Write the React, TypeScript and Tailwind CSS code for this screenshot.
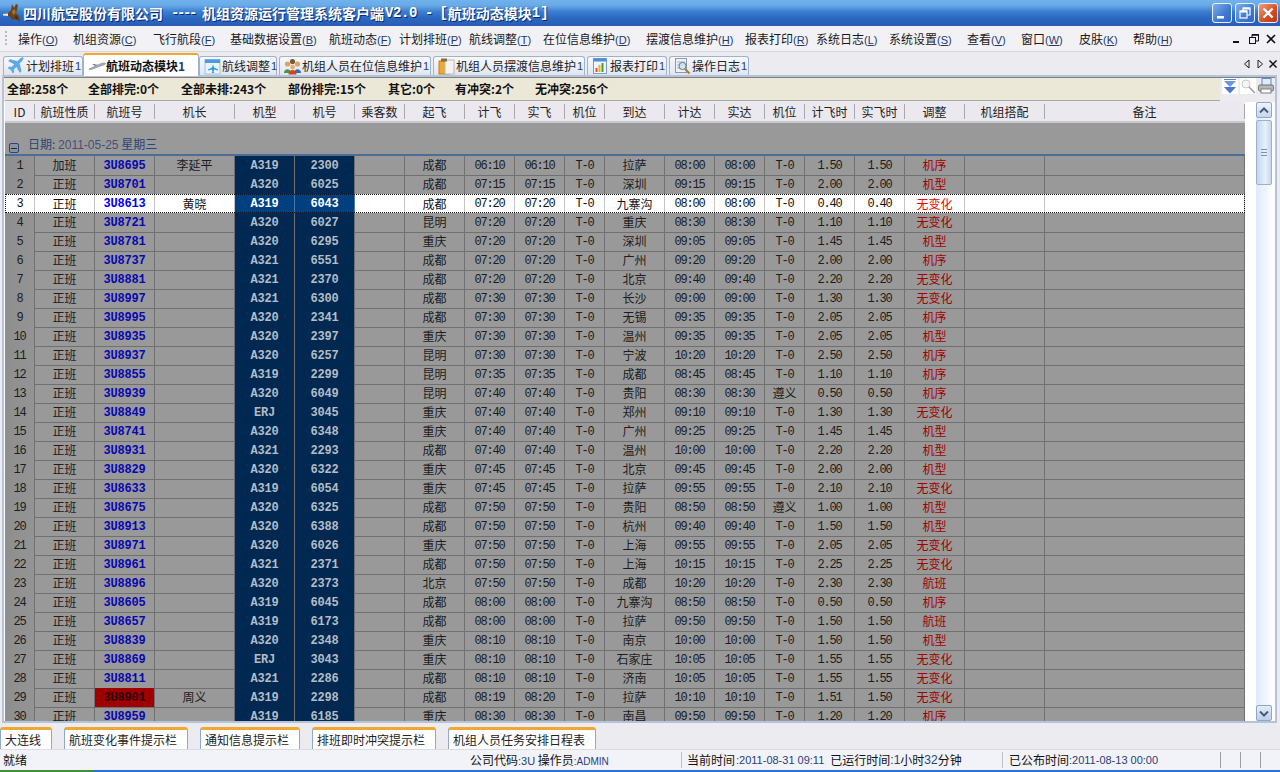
import React from "react";

const CJK = "font-['Noto_Sans_CJK_SC','Liberation_Sans',sans-serif]";
const MONO = "font-['Liberation_Mono','Noto_Sans_CJK_SC',monospace]";
const GRID = "grid grid-cols-[30px_60px_60px_80px_60px_60px_50px_60px_50px_50px_40px_60px_50px_50px_40px_50px_50px_60px_80px_200px]";

const raw = `1 加班 3U8695 李延平 A319 2300 成都 06:10 06:10 T-0 拉萨 08:00 08:00 T-0 1.50 1.50 机序
2 正班 3U8701 - A320 6025 成都 07:15 07:15 T-0 深圳 09:15 09:15 T-0 2.00 2.00 机型
3 正班 3U8613 黄晓 A319 6043 成都 07:20 07:20 T-0 九寨沟 08:00 08:00 T-0 0.40 0.40 无变化
4 正班 3U8721 - A320 6027 昆明 07:20 07:20 T-0 重庆 08:30 08:30 T-0 1.10 1.10 无变化
5 正班 3U8781 - A320 6295 重庆 07:20 07:20 T-0 深圳 09:05 09:05 T-0 1.45 1.45 机型
6 正班 3U8737 - A321 6551 成都 07:20 07:20 T-0 广州 09:20 09:20 T-0 2.00 2.00 机序
7 正班 3U8881 - A321 2370 成都 07:20 07:20 T-0 北京 09:40 09:40 T-0 2.20 2.20 无变化
8 正班 3U8997 - A321 6300 成都 07:30 07:30 T-0 长沙 09:00 09:00 T-0 1.30 1.30 无变化
9 正班 3U8995 - A320 2341 成都 07:30 07:30 T-0 无锡 09:35 09:35 T-0 2.05 2.05 机序
10 正班 3U8935 - A320 2397 重庆 07:30 07:30 T-0 温州 09:35 09:35 T-0 2.05 2.05 机型
11 正班 3U8937 - A320 6257 昆明 07:30 07:30 T-0 宁波 10:20 10:20 T-0 2.50 2.50 机序
12 正班 3U8855 - A319 2299 昆明 07:35 07:35 T-0 成都 08:45 08:45 T-0 1.10 1.10 机序
13 正班 3U8939 - A320 6049 昆明 07:40 07:40 T-0 贵阳 08:30 08:30 遵义 0.50 0.50 机序
14 正班 3U8849 - ERJ 3045 重庆 07:40 07:40 T-0 郑州 09:10 09:10 T-0 1.30 1.30 无变化
15 正班 3U8741 - A320 6348 重庆 07:40 07:40 T-0 广州 09:25 09:25 T-0 1.45 1.45 机型
16 正班 3U8931 - A321 2293 成都 07:40 07:40 T-0 温州 10:00 10:00 T-0 2.20 2.20 机型
17 正班 3U8829 - A320 6322 重庆 07:45 07:45 T-0 北京 09:45 09:45 T-0 2.00 2.00 机型
18 正班 3U8633 - A319 6054 重庆 07:45 07:45 T-0 拉萨 09:55 09:55 T-0 2.10 2.10 无变化
19 正班 3U8675 - A320 6325 成都 07:50 07:50 T-0 贵阳 08:50 08:50 遵义 1.00 1.00 机型
20 正班 3U8913 - A320 6388 成都 07:50 07:50 T-0 杭州 09:40 09:40 T-0 1.50 1.50 机型
21 正班 3U8971 - A320 6026 重庆 07:50 07:50 T-0 上海 09:55 09:55 T-0 2.05 2.05 无变化
22 正班 3U8961 - A321 2371 成都 07:50 07:50 T-0 上海 10:15 10:15 T-0 2.25 2.25 无变化
23 正班 3U8896 - A320 2373 北京 07:50 07:50 T-0 成都 10:20 10:20 T-0 2.30 2.30 航班
24 正班 3U8605 - A319 6045 成都 08:00 08:00 T-0 九寨沟 08:50 08:50 T-0 0.50 0.50 机序
25 正班 3U8657 - A319 6173 成都 08:00 08:00 T-0 拉萨 09:50 09:50 T-0 1.50 1.50 航班
26 正班 3U8839 - A320 2348 重庆 08:10 08:10 T-0 南京 10:00 10:00 T-0 1.50 1.50 机型
27 正班 3U8869 - ERJ 3043 重庆 08:10 08:10 T-0 石家庄 10:05 10:05 T-0 1.55 1.55 无变化
28 正班 3U8811 - A321 2286 成都 08:10 08:10 T-0 济南 10:05 10:05 T-0 1.55 1.55 无变化
29 正班 3U8901 周义 A319 2298 成都 08:19 08:20 T-0 拉萨 10:10 10:10 T-0 1.51 1.50 无变化
30 正班 3U8959 - A319 6185 重庆 08:30 08:30 T-0 南昌 09:50 09:50 T-0 1.20 1.20 机序`;

const rows = raw.split("\n").map((l) => l.split(" "));

const headers = ["ID", "航班性质", "航班号", "机长", "机型", "机号", "乘客数", "起飞", "计飞", "实飞", "机位", "到达", "计达", "实达", "机位", "计飞时", "实飞时", "调整", "机组搭配", "备注"];

const menus: [string, string, string][] = [
  ["操作", "O", "w-[55px]"],
  ["机组资源", "C", "w-[80px]"],
  ["飞行航段", "F", "w-[77px]"],
  ["基础数据设置", "B", "w-[99px]"],
  ["航班动态", "F", "w-[70px]"],
  ["计划排班", "P", "w-[70px]"],
  ["航线调整", "T", "w-[74px]"],
  ["在位信息维护", "D", "w-[103px]"],
  ["摆渡信息维护", "H", "w-[99px]"],
  ["报表打印", "R", "w-[71px]"],
  ["系统日志", "L", "w-[73px]"],
  ["系统设置", "S", "w-[78px]"],
  ["查看", "V", "w-[54px]"],
  ["窗口", "W", "w-[58px]"],
  ["皮肤", "K", "w-[54px]"],
  ["帮助", "H", "w-[60px]"],
];

function Logo() {
  return (
    <svg width="18" height="20" viewBox="0 0 18 20" className="mr-[2px] shrink-0">
      <path d="M0 11 L5 10.5 L6.5 12 L5 13 L0 12.5 Z" fill="#f4e8c8" />
      <path d="M5 10 L8 7 L9 1 L11 5 L13 1 L15 2 L14 7 L13 10 L16 13 L17 19 L13 16 L10 17 L7 14 L5 13 Z" fill="#6b431a" />
      <path d="M9 8 L12 6 L12.5 10 L10 12 Z" fill="#a8742e" />
      <path d="M13 12 L15.5 17 L12 15 Z" fill="#3f280e" />
    </svg>
  );
}

function PlaneBlue() {
  return (
    <svg width="18" height="18" viewBox="0 0 18 18">
      <path d="M16.5 1.2c-1-.7-2.6-.2-3.6.8L10.5 4.4 3 2.5 1.6 3.9l6 3.3-3 3.1-2.4-.4L1 11l3 1.7L5.8 16l1.1-1.1-.4-2.5 3-3 3.3 6 1.4-1.4-1.9-7.5 2.5-2.5c1-1 1.4-2.6.7-3.4z" fill="#5aaee8" stroke="#3a86c8" strokeWidth="0.4" />
    </svg>
  );
}
function PlaneGrey() {
  return (
    <svg width="18" height="10" viewBox="0 0 18 10">
      <path d="M1 8 L12 3 C14 2 17 1.6 17.5 2.4 C17.8 3.2 15 4.2 13 4.8 L6 7.5 C4 8.6 2 8.9 1 8 Z" fill="#a8b2c2" stroke="#66728a" strokeWidth="0.5" />
      <path d="M7 5 L4 3 L6.5 3 L10 4 Z" fill="#7b8696" />
    </svg>
  );
}
function RouteIcon() {
  return (
    <svg width="17" height="17" viewBox="0 0 17 17">
      <rect x="1" y="1.5" width="15" height="14.5" fill="#eaf3fb" stroke="#a4c2dc" />
      <rect x="1" y="1.5" width="15" height="3.5" fill="#4a9adc" />
      <path d="M9 6.5 L10 9.5 L14 11.5 L14 12.5 L10 11.5 L9.6 14 L10.6 15 L7.4 15 L8.4 14 L8 11.5 L4 12.5 L4 11.5 L8 9.5 Z" fill="#2c9ad8" />
    </svg>
  );
}
function CrewIcon() {
  return (
    <svg width="19" height="17" viewBox="0 0 19 17">
      <circle cx="4.5" cy="6" r="2.6" fill="#d9a46a" />
      <path d="M1 15 C1 10 8 10 8 15 Z" fill="#3f9a3a" />
      <circle cx="14.5" cy="6" r="2.6" fill="#d9a46a" />
      <path d="M11 15 C11 10 18 10 18 15 Z" fill="#2f6fb8" />
      <circle cx="9.5" cy="3.5" r="2.6" fill="#7a5a30" />
      <circle cx="9.5" cy="9" r="2.4" fill="#e8b070" />
      <path d="M5.5 16.5 C5.5 10.5 13.5 10.5 13.5 16.5 Z" fill="#d84020" />
    </svg>
  );
}
function FolderIcon() {
  return (
    <svg width="17" height="18" viewBox="0 0 17 18">
      <rect x="1" y="4" width="10" height="13" fill="#f0a832" stroke="#c47f18" />
      <rect x="7" y="3" width="9" height="14" fill="#f4f4f4" stroke="#b8b8b8" />
      <rect x="3" y="1.5" width="6" height="3" fill="#8a6a36" />
    </svg>
  );
}
function ReportIcon() {
  return (
    <svg width="16" height="18" viewBox="0 0 16 18">
      <rect x="1.5" y="1.5" width="13" height="15" fill="#f2f6fb" stroke="#7d9cc4" />
      <rect x="1.5" y="1.5" width="13" height="3" fill="#4f8ed2" />
      <rect x="3.5" y="11" width="2" height="4" fill="#e05030" />
      <rect x="6.5" y="8" width="2" height="7" fill="#f0b020" />
      <rect x="9.5" y="6" width="2" height="9" fill="#40a040" />
    </svg>
  );
}
function LogIcon() {
  return (
    <svg width="17" height="18" viewBox="0 0 17 18">
      <rect x="1.5" y="1.5" width="11" height="14" fill="#eef1f6" stroke="#8d99b0" />
      <path d="M3 5h8M3 8h8M3 11h5" stroke="#a8b2c4" />
      <circle cx="8.5" cy="9" r="3.6" fill="#cfe3f5" fillOpacity="0.7" stroke="#5d7aa0" />
      <path d="M11 12 L15.5 16.5" stroke="#b07a30" strokeWidth="2" />
    </svg>
  );
}

function TopTab({ icon, label, w, active }: { icon: React.ReactNode; label: string; w: string; active?: boolean }) {
  if (active) {
    return (
      <div className={`${w} h-[23px] -mb-px relative z-10 flex items-center pl-[3px] border-x border-[#9db4cf] border-t-2 border-t-[#f0a830] rounded-t-[3px] bg-white font-bold text-[#111]`}>
        <span className="w-[19px] flex justify-center shrink-0">{icon}</span>
        <span>{label}</span>
        <span className="text-[#1b3c7a]">1</span>
      </div>
    );
  }
  return (
    <div className={`${w} h-[19px] flex items-center pl-[2px] border-x border-t border-[#9db4cf] rounded-t-[3px] bg-[linear-gradient(#f8f9fc,#dfe5f0)] text-[#222]`}>
      <span className="w-[20px] flex justify-center shrink-0">{icon}</span>
      <span className="whitespace-nowrap">{label}</span>
      <span className="text-[#27407a] font-['Liberation_Sans'] text-[11px] ml-[1px]">1</span>
    </div>
  );
}

function BottomTab({ label, w, ml }: { label: string; w: string; ml: string }) {
  return (
    <div className={`${w} ${ml} h-[22px] flex items-center pl-[4px] bg-white border-x border-[#8fa9c8] border-t-[3px] border-t-[#f0a830] rounded-t-[3px] text-[12px] text-[#222]`}>
      {label}
    </div>
  );
}

function Row({ r }: { r: string[] }) {
  const sel = r[0] === "3";
  const red = r[0] === "29";
  const base = sel
    ? "border-r border-[#c4c4c4] bg-white text-[#111]"
    : "border-r border-b border-[#707070] text-[#1c1c1c]";
  const cellCls = `${base} h-full flex items-center justify-center overflow-hidden whitespace-nowrap`;
  const cjk = sel ? "" : "pb-[2px]";
  const num = `${MONO} text-[12px] tracking-[-1.2px]`;
  const navy = sel
    ? "border-r border-[#4a78a8] bg-[#004080] text-white"
    : "border-r border-b border-[#707070] bg-[#002850] text-[#b4bcc6]";
  const navyCls = `${navy} h-full pt-[1px] flex items-center justify-center ${MONO} text-[12px] font-bold tracking-[-0.2px]`;
  return (
    <div className={`${GRID} h-[19px] relative text-[12px] ${sel ? "outline-1 outline-dotted outline-offset-[-1px] outline-[#111] z-10" : ""}`}>
      <div className={`${cellCls} ${num} ${sel ? "bg-[#f0f0f0]" : "bg-[linear-gradient(90deg,#8e8e8e,#949494)]"}`}>{r[0]}</div>
      <div className={`${cellCls} ${cjk}`}>{r[1]}</div>
      <div className={`${cellCls} pt-[1px] ${MONO} text-[12px] font-bold tracking-[-0.2px] ${red ? "bg-[#a00000] !text-[#2a0000]" : sel ? "!text-[#0000f0]" : "!text-[#0808b0]"}`}>{r[2]}</div>
      <div className={`${cellCls} ${cjk}`}>{r[3] === "-" ? "" : r[3]}</div>
      <div className={navyCls}>{r[4]}</div>
      <div className={navyCls}>{r[5]}</div>
      <div className={cellCls}></div>
      <div className={`${cellCls} ${cjk}`}>{r[6]}</div>
      <div className={`${cellCls} ${num}`}>{r[7]}</div>
      <div className={`${cellCls} ${num}`}>{r[8]}</div>
      <div className={`${cellCls} ${r[9] === "T-0" ? num : cjk}`}>{r[9]}</div>
      <div className={`${cellCls} ${cjk}`}>{r[10]}</div>
      <div className={`${cellCls} ${num}`}>{r[11]}</div>
      <div className={`${cellCls} ${num}`}>{r[12]}</div>
      <div className={`${cellCls} ${r[13] === "T-0" ? num : cjk}`}>{r[13]}</div>
      <div className={`${cellCls} ${num}`}>{r[14]}</div>
      <div className={`${cellCls} ${num}`}>{r[15]}</div>
      <div className={`${cellCls} ${cjk} ${sel ? "!text-[#f00000]" : "!text-[#a00000]"}`}>{r[16]}</div>
      <div className={cellCls}></div>
      <div className={cellCls}></div>
    </div>
  );
}

function WinBtn({ kind }: { kind: "min" | "max" | "close" }) {
  const bg =
    kind === "close"
      ? "bg-[linear-gradient(135deg,#f0a080,#d84a20_60%,#c03810)]"
      : "bg-[linear-gradient(135deg,#7fb0ea,#3f78d0_60%,#3468c4)]";
  return (
    <div className={`w-[20px] h-[20px] ml-[3px] rounded-[3px] border border-[#e8f0fa] flex items-center justify-center ${bg}`}>
      <svg width="14" height="14" viewBox="0 0 14 14">
        {kind === "min" && <rect x="2" y="10" width="7" height="2.5" fill="white" />}
        {kind === "max" && (
          <g fill="none" stroke="white" strokeWidth="1.2">
            <rect x="2" y="5" width="7" height="7" />
            <path d="M5 5V2h7v7H9" />
            <path d="M2 5.5h7M5 2.5h7" strokeWidth="2" />
          </g>
        )}
        {kind === "close" && <path d="M2.5 2.5 L11.5 11.5 M11.5 2.5 L2.5 11.5" stroke="white" strokeWidth="2.4" />}
      </svg>
    </div>
  );
}

export default function App() {
  const mn = `${MONO} text-[14px] font-bold`;
  return (
    <div className={`w-[1280px] h-[772px] flex flex-col overflow-hidden bg-[#ecebef] text-[12px] ${CJK}`}>
      {/* Title */}
      <div className="h-[26px] shrink-0 flex items-center pl-[3px] pr-[2px] bg-[linear-gradient(#6fb2ec,#6aaae8_20%,#3a7ed0_45%,#2a68c0_70%,#2b5cb4)] text-white font-bold text-[14px] leading-none [text-shadow:1px_1px_0_#0a2a70]">
        <Logo />
        <span>四川航空股份有限公司</span>
        <span className={`${mn} ml-[8px] tracking-[-2.4px]`}>----</span>
        <span className="ml-[7px]">机组资源运行管理系统客户端</span>
        <span className={`${mn} tracking-[-0.4px] ml-[1px]`}>V2.0</span>
        <span className={`${mn} ml-[8px]`}>-</span>
        <span className={`${mn} ml-[6px]`}>[</span>
        <span>航班动态模块</span>
        <span className={mn}>1]</span>
        <div className="ml-auto flex items-center">
          <WinBtn kind="min" />
          <WinBtn kind="max" />
          <WinBtn kind="close" />
        </div>
      </div>

      {/* Menu */}
      <div className="h-[26px] shrink-0 flex items-center pl-[4px] bg-[#f2f2f6] border-b border-[#d8d8dc] text-[#1a1a1a]">
        <svg width="6" height="20" viewBox="0 0 6 20" className="shrink-0">
          <g fill="#b8b8c0">
            <rect x="1" y="2" width="2" height="2" />
            <rect x="1" y="6" width="2" height="2" />
            <rect x="1" y="10" width="2" height="2" />
            <rect x="1" y="14" width="2" height="2" />
          </g>
        </svg>
        <div className="flex ml-[8px] pt-[1px]">
          {menus.map(([t, k, w], i) => (
            <div key={i} className={`${w} whitespace-nowrap`}>
              {t}
              <span className="font-['Liberation_Sans'] text-[11px] text-[#24386e]">
                (<span className="underline">{k}</span>)
              </span>
            </div>
          ))}
        </div>
        <div className="ml-auto flex items-center gap-[5px] pr-[3px]">
          <svg width="12" height="12" viewBox="0 0 12 12"><rect x="2" y="8" width="6" height="2" fill="#111" /></svg>
          <svg width="12" height="12" viewBox="0 0 12 12" fill="none" stroke="#111"><rect x="1.5" y="4.5" width="6" height="6" /><path d="M4 4V1.5h6.5V8H8" /><path d="M4 2h6.5" strokeWidth="1.5" /></svg>
          <svg width="12" height="12" viewBox="0 0 12 12"><path d="M2 2 L10 10 M10 2 L2 10" stroke="#111" strokeWidth="1.6" /></svg>
        </div>
      </div>

      {/* Tabs */}
      <div className="h-[23px] shrink-0 flex items-end pl-[3px] relative">
        <TopTab icon={<PlaneBlue />} label="计划排班" w="w-[80px]" />
        <TopTab icon={<PlaneGrey />} label="航班动态模块" w="w-[116px]" active />
        <TopTab icon={<RouteIcon />} label="航线调整" w="w-[78px]" />
        <div className="w-[2px]" />
        <TopTab icon={<CrewIcon />} label="机组人员在位信息维护" w="w-[152px]" />
        <div className="w-[2px]" />
        <TopTab icon={<FolderIcon />} label="机组人员摆渡信息维护" w="w-[152px]" />
        <div className="w-[2px]" />
        <TopTab icon={<ReportIcon />} label="报表打印" w="w-[80px]" />
        <div className="w-[2px]" />
        <TopTab icon={<LogIcon />} label="操作日志" w="w-[80px]" />
        <div className="ml-auto flex items-center gap-[3px] pr-[2px] self-center">
          <svg width="10" height="10" viewBox="0 0 10 10"><path d="M7 1 L2.5 5 L7 9 Z" fill="none" stroke="#222" /></svg>
          <svg width="10" height="10" viewBox="0 0 10 10"><path d="M3 1 L7.5 5 L3 9 Z" fill="none" stroke="#222" /></svg>
          <svg width="10" height="10" viewBox="0 0 10 10"><path d="M1.5 1.5 L8.5 8.5 M8.5 1.5 L1.5 8.5" stroke="#111" strokeWidth="1.5" /></svg>
        </div>
      </div>

      {/* Main panel */}
      <div className="h-[648px] shrink-0 ml-[2px] mr-[3px] border-2 border-[#b4c3d8] bg-white flex flex-col overflow-hidden">
        <div className="h-[1px] bg-[#808080] shrink-0" />
        {/* Summary */}
        <div className="h-[24px] shrink-0 flex bg-[#ecebef]">
          <div className="w-[1215px] ml-[1px] h-[23px] pl-[2px] flex items-center bg-[#ece8d8] border-b border-[#a8a8a8] font-bold text-[#111] whitespace-nowrap">
            <span className="w-[81px]">全部:258个</span>
            <span className="w-[93px]">全部排完:0个</span>
            <span className="w-[107px]">全部未排:243个</span>
            <span className="w-[100px]">部份排完:15个</span>
            <span className="w-[67px]">其它:0个</span>
            <span className="w-[80px]">有冲突:2个</span>
            <span>无冲突:256个</span>
          </div>
          <div className="flex items-start gap-[2px] ml-[2px]">
            <div className="w-[16px] h-[16px] bg-white flex items-center justify-center">
              <svg width="14" height="15" viewBox="0 0 14 15">
                <path d="M1 0.5h12" stroke="#5a86d8" />
                <path d="M1 2 L13 2 L7 8 Z" fill="#6a96e0" />
                <path d="M1 8 L13 8 L7 14.5 Z" fill="#4a78cc" />
              </svg>
            </div>
            <div className="w-[16px] h-[16px] bg-white flex items-center justify-center">
              <svg width="16" height="16" viewBox="0 0 16 16">
                <circle cx="6" cy="6" r="4" fill="#f6f6f6" stroke="#c8c8c8" />
                <path d="M9 9 L15 15" stroke="#9a9a9a" strokeWidth="1.5" />
              </svg>
            </div>
            <svg width="16" height="16" viewBox="0 0 16 16">
              <rect x="4" y="0.5" width="9" height="7" fill="#dfeafa" stroke="#5a8ad0" />
              <rect x="0.5" y="7" width="15" height="6" rx="1.5" fill="#b8b8b8" stroke="#707070" />
              <rect x="3" y="11" width="10" height="4" fill="#fafafa" stroke="#808080" />
            </svg>
          </div>
        </div>

        <div className="flex-1 min-h-0 flex">
          {/* Table */}
          <div className="w-[1240px] ml-[1px] flex flex-col overflow-hidden shrink-0">
            <div className={`${GRID} h-[19px] shrink-0 bg-[#ebe9ef] text-[#222]`}>
              {headers.map((h, i) => (
                <div key={i} className="h-full flex items-center justify-center">
                  <span className="w-full text-center border-r border-[#a8a8ac] leading-[15px] h-[15px] flex items-center justify-center">{h}</span>
                </div>
              ))}
            </div>
            <div className="h-[2px] shrink-0 bg-[#c8c8cc]" />
            <div className="h-[33px] shrink-0 bg-[#999999] border-b-2 border-[#4f6c96] flex items-end pl-[4px] text-[#2c4474]">
              <span className="w-[10px] h-[10px] mb-[1px] border border-[#2c4474] rounded-[2px] flex items-center justify-center bg-[#8c93a0]">
                <span className="w-[6px] h-[1px] bg-[#17254a]" />
              </span>
              <span className="ml-[9px] leading-[17px]">
                日期: <span className="font-['Liberation_Sans'] text-[12px] text-[#45507a]">2011-05-25</span> 星期三
              </span>
            </div>
            <div className="bg-[#999999] flex-1 min-h-0 overflow-hidden">
              {rows.map((r) => (
                <Row key={r[0]} r={r} />
              ))}
            </div>
          </div>
          {/* Scrollbar area */}
          <div className="flex-1 flex flex-col">
            <div className="ml-[11px] w-[16px] flex-1 flex flex-col bg-[linear-gradient(90deg,#dfeafa,#fbfdff)]">
              <div className="h-[16px] shrink-0 rounded-[2px] border border-[#8ea6c8] bg-[linear-gradient(#f0f5fc,#c4d6ee)] flex items-center justify-center">
                <svg width="10" height="7" viewBox="0 0 10 7"><path d="M1 5.5 L5 1.5 L9 5.5" fill="none" stroke="#4a5c78" strokeWidth="2" /></svg>
              </div>
              <div className="h-[65px] mt-[2px] shrink-0 rounded-[2px] border border-[#9ab0d0] bg-[linear-gradient(90deg,#c4d6f0,#e8f0fb_60%,#c4d6f0)] flex items-center justify-center">
                <div className="w-[6px] h-[7px] border-y border-[#7f8fa8] relative">
                  <div className="absolute left-0 right-0 top-[2px] h-[1px] bg-[#7f8fa8]" />
                </div>
              </div>
              <div className="flex-1" />
              <div className="h-[16px] shrink-0 rounded-[2px] border border-[#8ea6c8] bg-[linear-gradient(#e4edf9,#bcd0ea)] flex items-center justify-center">
                <svg width="10" height="7" viewBox="0 0 10 7"><path d="M1 1.5 L5 5.5 L9 1.5" fill="none" stroke="#4a5c78" strokeWidth="2" /></svg>
              </div>
            </div>
          </div>
        </div>
      </div>

      {/* Bottom tabs */}
      <div className="h-[27px] shrink-0 flex items-end border-b border-[#dcdce2]">
        <BottomTab label="大连线" w="w-[52px]" ml="ml-0" />
        <BottomTab label="航班变化事件提示栏" w="w-[124px]" ml="ml-[12px]" />
        <BottomTab label="通知信息提示栏" w="w-[100px]" ml="ml-[12px]" />
        <BottomTab label="排班即时冲突提示栏" w="w-[124px]" ml="ml-[12px]" />
        <BottomTab label="机组人员任务安排日程表" w="w-[148px]" ml="ml-[12px]" />
      </div>

      {/* Status */}
      <div className="h-[20px] shrink-0 flex items-center bg-[#f2f3f8] text-[#111] whitespace-nowrap">
        <span className="w-[467px] pl-[3px]">就绪</span>
        <span className="w-[214px] pl-[3px]">
          公司代码<span className="font-['Liberation_Sans'] text-[11px] text-[#27407a]">:3U</span> 操作员<span className="font-['Liberation_Sans'] text-[10px] text-[#27407a]">:ADMIN</span>
        </span>
        <span className="w-[321px] h-[16px] pl-[5px] border-l border-[#c0c0c8] flex items-center">
          当前时间<span className="font-['Liberation_Sans'] text-[11px] text-[#27407a] mx-[1px]">:2011-08-31 09:11</span>
          <span className="ml-[5px]">已运行时间</span><span className="font-['Liberation_Sans'] text-[#27407a]">:1</span>小时<span className="font-['Liberation_Sans'] text-[#27407a]">32</span>分钟
        </span>
        <span className="w-[218px] h-[16px] pl-[6px] border-l border-[#c0c0c8] flex items-center">
          已公布时间<span className="font-['Liberation_Sans'] text-[11px] text-[#27407a]">:2011-08-13 00:00</span>
        </span>
        <span className="w-[20px] h-[16px] border-l border-[#9c9ca4]" />
        <span className="w-[20px] h-[16px] border-l border-[#9c9ca4]" />
        <span className="w-[20px] h-[16px] border-l border-[#9c9ca4]" />
      </div>
      <div className="h-[2px] shrink-0 flex">
        <div className="w-[93px] bg-[#3f8f38]" />
        <div className="flex-1 bg-[#2f6fe0]" />
      </div>
    </div>
  );
}
